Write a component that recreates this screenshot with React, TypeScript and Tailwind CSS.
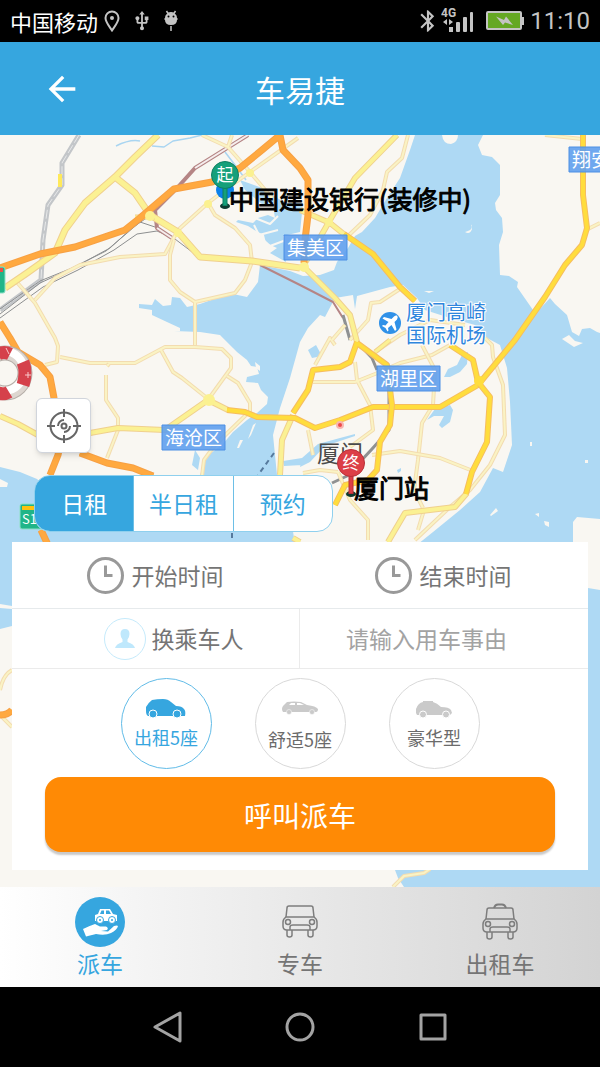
import { useState } from 'react';
import type { ReactNode } from 'react';
import { MdArrowBack, MdBluetooth, MdUsb } from 'react-icons/md';

const rentModes = ['日租', '半日租', '预约'];

interface RoadProps {
  d: string;
  width?: number;
}

function PaleRoad({ d, width = 4 }: RoadProps) {
  return (
    <>
      <path d={d} stroke="#f3dcb0" strokeWidth={width} />
      <path d={d} stroke="#faf3c4" strokeWidth={width - 2} />
    </>
  );
}

function YellowRoad({ d, width = 6 }: RoadProps) {
  return (
    <>
      <path d={d} stroke="#f0d08e" strokeWidth={width} />
      <path d={d} stroke="#fbf193" strokeWidth={width - 2} />
    </>
  );
}

function MainRoad({ d, width = 6 }: RoadProps) {
  return (
    <>
      <path d={d} stroke="#f6bd60" strokeWidth={width} />
      <path d={d} stroke="#ffdd3d" strokeWidth={width - 2} />
    </>
  );
}

function Highway({ d, width = 6 }: RoadProps) {
  return (
    <>
      <path d={d} stroke="#f7a044" strokeWidth={width} />
      <path d={d} stroke="#ffa940" strokeWidth={width - 2} />
    </>
  );
}

function DistrictLabel({ x, y, name }: { x: number; y: number; name: string }) {
  return (
    <g>
      <rect x={x} y={y} width="63" height="25" fill="#5f9fee" fillOpacity="0.9" stroke="#4d8fe4" />
      <text x={x + 3} y={y + 20} fontSize="19" fill="#fff">
        {name}
      </text>
    </g>
  );
}

function Pin({ x, y, color, dark, label }: { x: number; y: number; color: string; dark: string; label: string }) {
  return (
    <g>
      <ellipse cx={x} cy={y + 31} rx="5" ry="3" fill="#0d3a30" />
      <path d={`M${x} ${y + 12}v19`} stroke={dark} strokeWidth="5" />
      <path d={`M${x} ${y + 12}v18`} stroke={color} strokeWidth="3" />
      <circle cx={x} cy={y} r="13.500" fill={color} stroke={dark} />
      <text x={x} y={y + 6} fontSize="17" fill="#fff" textAnchor="middle">
        {label}
      </text>
    </g>
  );
}

function CityMap() {
  return (
    <svg
      className="absolute inset-0 size-full"
      viewBox="0 135 600 752"
      preserveAspectRatio="xMidYMin slice"
      fill="none"
      strokeLinejoin="round"
    >
      <rect y="135" width="600" height="752" fill="#aed9f4" />

      {/* land */}
      <g fill="#f9f7f2">
        <path d="M0 135H415L410 150L400 178L387 198L375 218L362 232L355 236L348 248L337 262L334 270L320 275L303 276L290 271L260 265L258 282L247 297L233 294L217 298L200 304L187 307L180 298L172 297L171 305L163 306L155 299L152 305L139 304V308L152 310V315L167 322L180 328V331H174L200 332L220 335L233 348L237 352L247 360L251 366L257 367L259 374L247 377L246 382L258 383L261 390L268 397L267 404L257 413L247 420L233 432L222 445L207 456L200 475V500H60L37 479L20 472L0 467Z" />
        <path d="M483 135L478 145L482 155L492 157L500 165V195L495 203L496 210L502 218L503 232L499 245L500 275L509 276L518 282L517 287L533 310L537 312L550 298L555 304L567 315L572 332L579 336L582 329L590 328L597 332L600 333V135Z" />
        <path d="M308 328L320 315L325 317L335 298L353 295L355 309L357 296L390 287L403 285L417 298L425 310L450 318L475 325L487 338L500 345L507 368L510 402L512 445L503 472L493 468L480 492L460 510L433 532L418 544H295L288 500L277 475L273 435L280 408L290 378L300 342Z" />
        <path d="M442 135Q443 144 451 144Q458 142 458 135ZM562 339L569 335L575 341L583 343L574 347ZM0 479L8 483L7 487H0ZM0 604L12 606V609L0 608ZM255 362L260 366L260 371L256 368ZM472 229Q472 224 471 225Q474 230 465 232Q470 235 472 229ZM424 291H434L429 293Z" />
        <path d="M490 515L496 508L498 511L491 516ZM535 514l4-1v4ZM544 521l5 1v5l-4-2ZM530 442h2v4h-2ZM585 460h3v3h-3ZM253 425l3-2l-5 12l-3 4ZM240 440l3 0l-4 8l-2 0Z" />
        <path d="M573 542V522L577 517L600 519V590L588 588V542ZM0 629L12 626V870H395L398 878L404 887H0Z" />
      </g>

      {/* lakes and inlets */}
      <g fill="#aed9f4">
        <path d="M240 180L262 188L285 203H303L300 232L283 236L286 262L270 253L277 248L266 243L264 235L256 231L248 226L236 222L238 220L253 223L258 218L268 215L275 218L273 206L262 204L245 190Z" />
        <path d="M444 377L448 369L457 365L462 355L468 352L467 364L460 372L450 377ZM427 420L435 409L450 405L453 410L450 422L442 428L439 425L444 416L434 416ZM302 458L318 444L340 438L355 434V436L325 446L310 462L300 467ZM283 461L302 458V465L284 466ZM397 470l4-2l0 3l-3 2ZM308 350L316 345L322 356L312 358ZM195 450L200 458L198 470L192 465Z" />
      </g>
      <g stroke="#f9f7f2" strokeWidth="2">
        <path d="M245 214L270 224L278 216M254 225L259 235L278 230M259 236L270 246L286 240" />
      </g>
      <path d="M116 146Q130 139 140 141M152 146L164 147L173 141L190 138L202 135M225 152L235 165L246 180" stroke="#a9d5f1" strokeWidth="1.500" />

      {/* railways */}
      <path d="M79 135L62 163V185L48 205L43 240L41 280L0 310" stroke="#c3c6c9" strokeWidth="5" />
      <path d="M79 135L62 163V185L48 205L43 240L41 280L0 310" stroke="#e8e9ea" strokeDasharray="9 3" />
      <path d="M60 174V187" stroke="#ffe95a" strokeWidth="4" />
      <g stroke="#8d8f90">
        <path d="M0 314L40 283L75 267L110 248L132 228L148 217M0 318L43 287L78 270L114 250L137 234L157 231L175 239L200 258H240M0 309L40 281L72 268L106 251L140 222L158 228" />
      </g>
      <g stroke="#b58585" strokeWidth="4">
        <path d="M248 135L195 168L178 187L155 210L157 228L172 238" />
        <path d="M260 265L300 285L333 302L343 318" strokeWidth="2" />
      </g>
      <path d="M248 135L195 168M157 228L172 238" stroke="#f6eeee" strokeWidth="2" />
      <path d="M343 315L350 340M357 342L372 358L377 370M389 385V430L372 449L347 476L332 483" stroke="#8f9192" strokeWidth="3" />
      <path d="M274 453L258 475M232 533V542" stroke="#56799c" strokeWidth="2" strokeDasharray="5 4" />

      {/* small roads */}
      <PaleRoad d="M15 280L35 303L55 338L58 346L57 362L45 365" />
      <PaleRoad d="M35 300L55 278L80 265L120 257L165 254L178 230L208 203L225 190L250 172L298 138" />
      <PaleRoad d="M174 240L170 255V280L180 292L195 302L235 293L245 280L252 262L250 245L235 228L215 215L208 203M195 302V347" />
      <PaleRoad d="M202 135L228 147L250 172L272 198M228 147L232 135" />
      <PaleRoad d="M408 135L402 158L387 172L383 190L370 215L348 236" />
      <PaleRoad d="M60 357L90 363H135L165 347L195 347L222 349L231 358V368L210 397M227 376L238 383L250 403V411L215 445L204 460L202 476M161 350L173 372L182 378L207 398" />
      <PaleRoad d="M107 366L109 364M106 375V400L118 418V430L107 458" />
      <PaleRoad d="M485 338L492 345L493 357L503 385L505 435L490 465L470 490L450 507L415 540" />
      <PaleRoad d="M313 382H355L375 374L400 363L432 355L450 345M335 345L330 338L315 365M355 362L357 380L370 405L373 430L350 447" />
      <PaleRoad d="M422 345L435 370L433 405L422 423L418 460L414 490L423 508" />
      <PaleRoad d="M372 455L400 451L440 458L473 471M308 430L313 455M303 473L320 470L338 472M338 472L350 500L368 520V540M424 510L418 530" />
      <PaleRoad d="M545 135L582 139M586 230L600 223M332 340L345 325M350 340L368 320L371 303L380 302L403 287M375 352L400 335L430 320L465 325" />
      <PaleRoad d="M0 690Q3 675 12 670M393 887L404 876L424 873L430 869M0 715L12 727" />

      {/* main roads */}
      <YellowRoad width={7} d="M5 288L27 273L55 253L65 230L85 203L115 177L135 157L158 135M115 177L135 193L150 215L178 232L200 257L252 261L300 268" />
      <YellowRoad d="M0 416L18 424L38 435M90 433L118 428L165 430L208 400L228 410M300 210L330 223L345 235M397 135L355 178L330 220L313 250L303 266L335 298L350 315L357 342" />
      <YellowRoad d="M293 415L282 440L280 475M293 538L300 542M467 493L455 507L430 510L405 513L395 530L388 542" />
      <YellowRoad d="M135 217H155M375 352L390 340" width={5} />
      <MainRoad d="M344 234L373 254L400 287L415 301M227 410L245 412L257 417L295 418L315 428L340 420L373 407H440L478 385L515 340L545 297L565 265L582 245L587 228L583 195V135" />
      <MainRoad d="M357 343L387 365L392 405L390 425L380 442L377 470L368 480L345 485L335 505M357 342L350 362L340 367L313 370L308 390L293 413M450 345L473 360L478 382L490 397L487 442L472 472L466 494" />
      <Highway width={7} d="M0 268L40 254L75 247L125 230L140 218L174 189L212 182L240 168L262 150L280 135L283 150L300 168L308 180V215L305 240L304 263" />
      <Highway width={7} d="M0 322L10 338L18 352L40 365L50 377L54 398L63 430L58 455L50 475M80 453L107 463L133 468L153 476M41 530L48 545M0 715Q8 715 12 710" />
      <g fill="#fbf190">
        <circle cx="150" cy="216" r="5" />
        <circle cx="250" cy="173" r="4" />
        <circle cx="208" cy="204" r="4" />
        <circle cx="178" cy="233" r="4" />
        <circle cx="209" cy="400" r="6" />
        <circle cx="329" cy="222" r="4" />
        <circle cx="304" cy="267" r="5" />
      </g>
      <circle cx="479" cy="381" r="5" fill="#ffdd3d" />

      {/* road signs */}
      <rect x="-12" y="267" width="17" height="26" rx="2" fill="#20b588" stroke="#8ee0c7" />
      <rect x="-12" y="268" width="15" height="4" fill="#ef4b45" />
      <rect x="20" y="504" width="30" height="25" rx="2" fill="#20b588" stroke="#8ee0c7" />
      <rect x="22" y="506" width="26" height="4" fill="#ffc20e" />
      <text x="22" y="524" fontSize="13" fill="#fff">
        S1
      </text>

      {/* lifebuoy */}
      <circle cx="5" cy="373" r="20" stroke="#b5aea8" strokeWidth="15" />
      <circle cx="5" cy="373" r="20" stroke="#ddd6d0" strokeWidth="13" />
      <circle cx="4" cy="371" r="20" stroke="#fff" strokeWidth="8" />
      <path d="M23 362Q27 372 23 385M-2 354Q4 351 10 354M-2 393Q4 395 9 392" stroke="#d5414b" strokeWidth="13" />
      <path d="M28 372v6M25 375h6M6 348l3 6" stroke="#f9c9cb" />

      <DistrictLabel x={284} y={235} name="集美区" />
      <DistrictLabel x={377} y={366} name="湖里区" />
      <DistrictLabel x={162} y={425} name="海沧区" />
      <DistrictLabel x={569} y={147} name="翔安区" />

      <circle cx="390" cy="323" r="11" fill="#3091e8" />
      <path
        d="M397 315.500Q395.500 315 394 316.500L391.500 319L384 317L382.500 318.500L388.500 322L385.500 325.500L383 325L382 326L385.500 328L387.500 331.500L388.500 330.500L388 328L391.500 325L395 331L396.500 329.500L394.500 322L397 319.500Q398.500 317 397 315.500Z"
        fill="#fff"
      />
      <g fontSize="20" fill="#2f86dd" stroke="#fff" strokeWidth="2" paintOrder="stroke">
        <text x="406" y="320">厦门高崎</text>
        <text x="406" y="343">国际机场</text>
      </g>
      <circle cx="340" cy="425" r="3" fill="#ee4a4a" stroke="#f9b6b0" strokeWidth="2" />
      <text x="317" y="462" fontSize="23" fill="#4a4a4a">
        厦门
      </text>

      <circle cx="225" cy="190" r="9" fill="#0b80ea" />
      <Pin x={225} y={175} color="#15a07a" dark="#0e7f62" label="起" />
      <Pin x={351} y={463} color="#dc3f47" dark="#b93037" label="终" />
      <g fontSize="25" fill="#000" stroke="#000">
        <text x="229" y="209">中国建设银行(装修中)</text>
        <text x="354" y="498">厦门站</text>
      </g>
    </svg>
  );
}

function StatusBar() {
  return (
    <div className="flex h-[42px] items-center justify-between bg-black px-2.5 text-[#c4c4c4]">
      <div className="flex items-center">
        <span className="text-[22px] leading-8 text-white">中国移动</span>
        <svg className="ml-1.5 h-[22px] w-4" viewBox="0 0 16 22" fill="none" stroke="currentColor" strokeWidth="2">
          <path d="M8 20.500C5 16 1.500 12 1.500 8A6.500 6.500 0 0 1 14.500 8C14.500 12 11 16 8 20.500Z" />
          <circle cx="8" cy="8" r="2" fill="currentColor" stroke="none" />
        </svg>
        <MdUsb className="ml-[11px] size-[22px]" />
        <svg className="ml-2.5 h-[22px] w-4" viewBox="0 0 16 22">
          <path
            d="M3.500 1L5 3.500Q8 2 11 3.500L12.500 1M8 16V21"
            stroke="currentColor"
            strokeWidth="1.500"
            fill="none"
          />
          <path d="M2 8Q2 3 8 3T14 8L15 9L14 10Q14 15 8 15T2 10L1 9Z" fill="currentColor" />
          <circle cx="5.500" cy="6.500" r="1" fill="#000" />
          <circle cx="10.500" cy="6.500" r="1" fill="#000" />
        </svg>
      </div>
      <div className="flex items-center">
        <MdBluetooth className="size-[26px]" />
        <svg className="h-7 w-[33px]" viewBox="0 0 33 28" fill="currentColor">
          <text x="0" y="10" fontSize="12" fontWeight="700" className="font-['Roboto']">
            4G
          </text>
          <path d="M2 15L6 12V18ZM12 15L8 12V18Z" />
          <rect x="8" y="20" width="4" height="5" />
          <rect x="15" y="15" width="4" height="10" rx="1" />
          <rect x="22" y="10" width="4" height="15" rx="1" />
          <rect x="29" y="5" width="3" height="20" rx="1" />
        </svg>
        <svg className="ml-3 h-5 w-[38px]" viewBox="0 0 38 20">
          <rect x="1" y="1" width="34" height="17" rx="1" fill="#65a823" stroke="#c4c4c4" strokeWidth="2" />
          <rect x="35" y="6" width="3" height="8" fill="#c4c4c4" />
          <path d="M10 5.500L18 9L20 5.500L27 14L19 11.500L17 14Z" fill="#c4c4c4" />
        </svg>
        <span className="ml-1.5 font-['Roboto'] text-2xl leading-8">11:10</span>
      </div>
    </div>
  );
}

function ClockIcon() {
  return (
    <svg className="size-[37px]" viewBox="0 0 37 37" fill="none" stroke="#999" strokeWidth="3">
      <circle cx="18.500" cy="18.500" r="17" />
      <path d="M18.500 8.500V18.500H25.500" />
    </svg>
  );
}

const carTypes = [
  {
    name: '出租5座',
    gap: 'gap-1.5',
    icon: (
      <>
        <path d="M2 17Q0 16 0 12V8Q2 4 6 1Q11 0 17 0Q22 0 25 3L30 7Q36 7 38 10Q40 12 39 17Z" />
        <circle cx="7" cy="15" r="4" stroke="#fff" />
        <circle cx="31" cy="15" r="4" stroke="#fff" />
      </>
    ),
  },
  {
    name: '舒适5座',
    gap: 'gap-2.5',
    icon: (
      <>
        <path
          fillRule="evenodd"
          d="M3 15Q1 12 3 9L7 5Q14 4 21 5L27 8Q36 9 38 12Q38 15 36 15ZM9 8H15V6L11 6ZM17 8H24L20 6H17Z"
        />
        <circle cx="9" cy="15" r="2.500" stroke="#fff" strokeWidth="0.500" />
        <circle cx="32" cy="15" r="2.500" stroke="#fff" strokeWidth="0.500" />
      </>
    ),
  },
  {
    name: '豪华型',
    gap: 'gap-1.5',
    icon: (
      <>
        <path d="M2 14V10Q4 4 9 3V2H19V3Q23 4 27 8Q35 8 37 11L38 14L36 16H3Z" />
        <circle cx="9" cy="15.500" r="3.500" stroke="#fff" />
        <circle cx="32" cy="15.500" r="3.500" stroke="#fff" />
      </>
    ),
  },
];

function CarFront({ taxi = false }: { taxi?: boolean }) {
  return (
    <svg
      className="h-[50px] w-10"
      viewBox={taxi ? '0 0 40 50' : '0 2 40 50'}
      fill="none"
      stroke="#7d7d7d"
      strokeWidth="1.500"
    >
      {taxi && <path d="M14 11Q15 7.500 18 7.500H22Q25 7.500 26 11" strokeWidth="2" />}
      <path d="M6 22L7 13Q7 11 9 11H31Q33 11 33 13L34 22" />
      <path d="M6 22H34Q37 24 37 27V31Q37 35 33 35H7Q3 35 3 31V27Q3 24 6 22Z" />
      <circle cx="8" cy="27" r="2.500" />
      <circle cx="32" cy="27" r="2.500" />
      <path d="M10 35V32Q10 30 13 30H27Q30 30 30 32V35M7 35V40Q7 42 9.500 42T12 40V35M28 35V40Q28 42 30.500 42T33 40V35" />
    </svg>
  );
}

function DispatchIcon() {
  return (
    <svg className="size-[50px]" viewBox="0 0 50 50">
      <circle cx="25" cy="25" r="25" fill="#36a6df" />
      <path
        fill="#fff"
        fillRule="evenodd"
        d="M20 24V18L23 17L25 12H35L38 17L42 18V24ZM25 17H29V13.500H26.500ZM31 17H36L34 13.500H31Z"
      />
      <g fill="#fff" stroke="#36a6df">
        <circle cx="25" cy="23" r="3.500" />
        <circle cx="37" cy="23" r="3.500" />
      </g>
      <circle cx="25" cy="23" r="1" fill="#36a6df" />
      <circle cx="37" cy="23" r="1" fill="#36a6df" />
      <path
        d="M8 32Q14 29 20 27L25 29.500L31 29.500Q34 31 32 33L26 34L33 34.500L39 29Q42 28 43 29Q42 33 36 36Q30 39 21 37L11 39.500Z"
        fill="#fff"
      />
    </svg>
  );
}

const navItems: { name: string; icon: ReactNode }[] = [
  { name: '派车', icon: <DispatchIcon /> },
  { name: '专车', icon: <CarFront /> },
  { name: '出租车', icon: <CarFront taxi /> },
];

export default function App() {
  const [mode, setMode] = useState(0);
  const [carType, setCarType] = useState(0);
  const [page, setPage] = useState(0);
  const [reason, setReason] = useState('');

  return (
    <div className="flex flex-col font-['Noto_Sans_CJK_SC',sans-serif]">
      <StatusBar />

      <header className="grid h-[93px] grid-cols-[1fr_auto_1fr] items-center bg-[#36a6df] text-white">
        <button type="button" aria-label="返回" className="ml-[42px] w-10">
          <MdArrowBack className="size-10" />
        </button>
        <h1 className="text-3xl leading-10">车易捷</h1>
      </header>

      <main className="relative overflow-hidden">
        <CityMap />
        <div className="relative px-3 pt-[263px] pb-[17px]">
          <button
            type="button"
            aria-label="定位"
            className="ml-6 flex size-[55px] items-center justify-center rounded-md border border-gray-300 bg-white shadow-md"
          >
            <svg className="size-[34px]" viewBox="0 0 34 34" fill="none" stroke="#666" strokeWidth="2">
              <circle cx="17" cy="17" r="13.500" />
              <circle cx="17" cy="17" r="2.500" />
              <path d="M17 0V8M17 26V34M0 17H8M26 17H34M11 17A6 6 0 0 1 17 11M23 17A6 6 0 0 1 17 23" />
            </svg>
          </button>

          <div className="mt-[22px] ml-[22px] flex h-[57px] w-[299px] overflow-hidden rounded-2xl border border-[#8fd0ee] bg-white">
            {rentModes.map((name, i) => (
              <button
                key={name}
                type="button"
                aria-pressed={mode === i}
                onClick={() => setMode(i)}
                className={`flex-1 border-[#6dbfe6] text-[23px] not-last:border-r ${
                  mode === i ? 'bg-[#36a6df] text-white' : 'text-[#36a6df]'
                }`}
              >
                {name}
              </button>
            ))}
          </div>

          <form className="mt-2.5 bg-white text-[23px] text-[#757575]" onSubmit={(e) => e.preventDefault()}>
            <div className="grid h-[67px] grid-cols-2 border-b border-[#e6eaec]">
              <button type="button" className="flex items-center justify-center gap-2 pr-0.5">
                <ClockIcon />
                开始时间
              </button>
              <button type="button" className="flex items-center justify-center gap-2 pr-0.5">
                <ClockIcon />
                结束时间
              </button>
            </div>
            <div className="grid h-[60px] grid-cols-2 border-b border-[#ebebeb]">
              <button type="button" className="flex items-center justify-center gap-1.5 border-r border-[#ebebeb] pl-9">
                <svg className="size-[42px]" viewBox="0 0 42 42">
                  <circle cx="21" cy="21" r="20.500" fill="none" stroke="#c5eafb" />
                  <path
                    d="M21 11Q25.500 11 25.500 16Q25.500 19 23.500 21.500V24Q30 26 31 30H11Q12 26 18.500 24V21.500Q16.500 19 16.500 16Q16.500 11 21 11Z"
                    fill="#bfe8fc"
                  />
                </svg>
                换乘车人
              </button>
              <input
                type="text"
                aria-label="用车事由"
                placeholder="请输入用车事由"
                value={reason}
                onChange={(e) => setReason(e.target.value)}
                className="min-w-0 pl-[46px] outline-none placeholder:text-[#a3a3a3]"
              />
            </div>

            <div className="flex justify-center gap-[43px] pt-[9px]">
              {carTypes.map((car, i) => (
                <button
                  key={car.name}
                  type="button"
                  aria-pressed={carType === i}
                  onClick={() => setCarType(i)}
                  className={`flex size-[91px] flex-col items-center justify-center rounded-full border text-lg leading-6 ${car.gap} ${
                    carType === i ? 'border-[#62bce8] text-[#36a6df]' : 'border-[#d9d9d9] text-[#6b6b6b]'
                  }`}
                >
                  <svg
                    className={`h-5 w-10 ${carType === i ? 'text-[#36a6df]' : 'text-[#cacaca]'}`}
                    viewBox="0 0 40 20"
                    fill="currentColor"
                  >
                    {car.icon}
                  </svg>
                  {car.name}
                </button>
              ))}
            </div>

            <div className="px-[33px] pt-2 pb-[18px]">
              <button
                type="submit"
                className="h-[75px] w-full rounded-2xl bg-[#ff8a05] text-[28px] text-white shadow-[0_3px_2px_#c9c9c9]"
              >
                呼叫派车
              </button>
            </div>
          </form>
        </div>
      </main>

      <nav className="grid h-[100px] grid-cols-3 bg-linear-to-r from-white to-[#d3d3d3]">
        {navItems.map((item, i) => (
          <button
            key={item.name}
            type="button"
            onClick={() => setPage(i)}
            className={`flex flex-col items-center pt-2.5 text-[23px] leading-8 ${
              page === i ? 'text-[#36a6df]' : 'text-[#757575]'
            }`}
          >
            {item.icon}
            {item.name}
          </button>
        ))}
      </nav>

      <div className="flex h-20 items-center justify-center gap-[93px] bg-black">
        <button type="button" aria-label="后退">
          <svg className="size-10" viewBox="0 0 40 40" fill="none" stroke="#a3a3a3" strokeWidth="3" strokeLinejoin="round">
            <path d="M8 20L33 6V34Z" />
          </svg>
        </button>
        <button type="button" aria-label="主页">
          <svg className="size-10" viewBox="0 0 40 40" fill="none" stroke="#a3a3a3" strokeWidth="3">
            <circle cx="20" cy="20" r="13" />
          </svg>
        </button>
        <button type="button" aria-label="最近任务">
          <svg className="size-10" viewBox="0 0 40 40" fill="none" stroke="#a3a3a3" strokeWidth="3" strokeLinejoin="round">
            <rect x="8" y="8" width="24" height="24" />
          </svg>
        </button>
      </div>
    </div>
  );
}
